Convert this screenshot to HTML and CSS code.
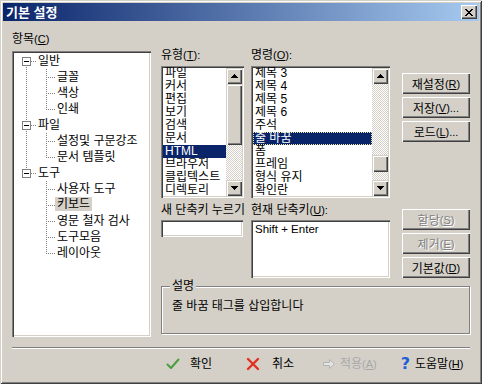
FILE: index.html
```html
<!DOCTYPE html>
<html lang="ko">
<head>
    <meta charset="UTF-8">
    <title>기본 설정</title>
    <link rel="stylesheet" href="styles.css">
</head>
<body>
<div class="window">
    <div class="titlebar">
        <span class="title">기본 설정</span>
        <span class="close">
            <svg width="8" height="7" viewBox="0 0 8 7" shape-rendering="crispEdges">
                <path d="M0 0h2v1h-2zM6 0h2v1h-2zM1 1h2v1h-2zM5 1h2v1h-2zM2 2h4v1h-4zM3 3h2v1h-2zM2 4h4v1h-4zM1 5h2v1h-2zM5 5h2v1h-2zM0 6h2v1h-2zM6 6h2v1h-2z" fill="#000"/>
            </svg>
        </span>
    </div>

    <div class="content">
        <div class="left">
            <div class="lbl">항목<span class="mn">(<u>C</u>)</span></div>
            <div class="tree sunken">
                <div class="node"><span class="ind box first"><i class="pm"></i></span><span class="txt">일반</span></div>
                <div class="node"><span class="ind vl"></span><span class="ind1"></span><span class="txt">글꼴</span></div>
                <div class="node"><span class="ind vl"></span><span class="ind1"></span><span class="txt">색상</span></div>
                <div class="node"><span class="ind vl"></span><span class="ind1 end"></span><span class="txt">인쇄</span></div>
                <div class="node"><span class="ind box"><i class="pm"></i></span><span class="txt">파일</span></div>
                <div class="node"><span class="ind vl"></span><span class="ind1"></span><span class="txt">설정및 구문강조</span></div>
                <div class="node"><span class="ind vl"></span><span class="ind1 end"></span><span class="txt">문서 템플릿</span></div>
                <div class="node"><span class="ind box last"><i class="pm"></i></span><span class="txt">도구</span></div>
                <div class="node"><span class="ind"></span><span class="ind1"></span><span class="txt">사용자 도구</span></div>
                <div class="node"><span class="ind"></span><span class="ind1"></span><span class="txt sel">키보드</span></div>
                <div class="node"><span class="ind"></span><span class="ind1"></span><span class="txt">영문 철자 검사</span></div>
                <div class="node"><span class="ind"></span><span class="ind1"></span><span class="txt">도구모음</span></div>
                <div class="node"><span class="ind"></span><span class="ind1 end"></span><span class="txt">레이아웃</span></div>
            </div>
        </div>

        <div class="right">
            <div class="row top">
                <div class="lists">
                    <div class="col type">
                        <div class="lbl">유형<span class="mn">(<u>T</u>):</span></div>
                        <div class="listbox sunken">
                            <ul class="items">
                                <li>파일</li>
                                <li>커서</li>
                                <li>편집</li>
                                <li>보기</li>
                                <li>검색</li>
                                <li>문서</li>
                                <li class="sel">HTML</li>
                                <li>브라우저</li>
                                <li>클립텍스트</li>
                                <li>디렉토리</li>
                            </ul>
                            <div class="vscroll">
                                <div class="sbtn"><svg width="7" height="4" viewBox="0 0 7 4" shape-rendering="crispEdges"><path d="M3 0h1v1h1v1h1v1h1v1h-7v-1h1v-1h1v-1h1z"/></svg></div>
                                <div class="track"><div class="thumb big"></div></div>
                                <div class="sbtn"><svg width="7" height="4" viewBox="0 0 7 4" shape-rendering="crispEdges"><path d="M0 0h7v1h-1v1h-1v1h-1v1h-1v-1h-1v-1h-1v-1h-1z"/></svg></div>
                            </div>
                        </div>
                    </div>
                    <div class="col cmd">
                        <div class="lbl">명령<span class="mn">(<u>O</u>):</span></div>
                        <div class="listbox sunken">
                            <ul class="items">
                                <li>제목 3</li>
                                <li>제목 4</li>
                                <li>제목 5</li>
                                <li>제목 6</li>
                                <li>주석</li>
                                <li class="sel focus">줄 바꿈</li>
                                <li>폼</li>
                                <li>프레임</li>
                                <li>형식 유지</li>
                                <li>확인란</li>
                            </ul>
                            <div class="vscroll">
                                <div class="sbtn"><svg width="7" height="4" viewBox="0 0 7 4" shape-rendering="crispEdges"><path d="M3 0h1v1h1v1h1v1h1v1h-7v-1h1v-1h1v-1h1z"/></svg></div>
                                <div class="track"><div class="thumb small"></div></div>
                                <div class="sbtn"><svg width="7" height="4" viewBox="0 0 7 4" shape-rendering="crispEdges"><path d="M0 0h7v1h-1v1h-1v1h-1v1h-1v-1h-1v-1h-1v-1h-1z"/></svg></div>
                            </div>
                        </div>
                    </div>
                </div>
                <div class="btns first-set">
                    <div class="btn">재설정<span class="mn">(<u>R</u>)</span></div>
                    <div class="btn">저장<span class="mn">(<u>V</u>)...</span></div>
                    <div class="btn">로드<span class="mn">(<u>L</u>)...</span></div>
                </div>
            </div>

            <div class="row mid">
                <div class="col newkey">
                    <div class="lbl">새 단축키 누르기</div>
                    <div class="field sunken"></div>
                </div>
                <div class="col curkey">
                    <div class="lbl">현재 단축키<span class="mn">(<u>U</u>):</span></div>
                    <div class="keybox sunken">Shift + Enter</div>
                </div>
                <div class="btns second-set">
                    <div class="btn off">할당<span class="mn">(<u>S</u>)</span></div>
                    <div class="btn off">제거<span class="mn">(<u>E</u>)</span></div>
                    <div class="btn">기본값<span class="mn">(<u>D</u>)</span></div>
                </div>
            </div>

            <fieldset class="desc">
                <legend>설명</legend>
                <div class="desc-text">줄 바꿈 태그를 삽입합니다</div>
            </fieldset>
        </div>
    </div>

    <div class="sep"></div>

    <div class="footer">
        <div class="fbtn ok">
            <svg class="ico" width="16" height="16" viewBox="0 0 16 16">
                <path d="M2.5 8.5 L6 12 L13.5 3.5" fill="none" stroke="#4a9e3f" stroke-width="2" stroke-linecap="round" stroke-linejoin="round"/>
            </svg>
            <span>확인</span>
        </div>
        <div class="fbtn cancel">
            <svg class="ico" width="16" height="16" viewBox="0 0 16 16">
                <path d="M3 3 L13 13 M13 3 L3 13" fill="none" stroke="#e3301f" stroke-width="2.4" stroke-linecap="round"/>
            </svg>
            <span>취소</span>
        </div>
        <div class="fbtn apply off">
            <svg class="ico" width="16" height="16" viewBox="0 0 16 16">
                <path d="M2.5 6.5 H8.5 V3.5 L13.5 8 L8.5 12.5 V9.5 H2.5 Z" fill="#e4e4e4" stroke="#b4b4b4" stroke-width="1"/>
            </svg>
            <span>적용<span class="mn">(<u>A</u>)</span></span>
        </div>
        <div class="fbtn help">
            <span class="q">?</span>
            <span>도움말<span class="mn">(<u>H</u>)</span></span>
        </div>
    </div>
</div>
</body>
</html>
```

FILE: styles.css
```css
html, body {
    margin: 0;
    padding: 0;
}
body {
    background: #d4d0c8;
    font-family: "Liberation Sans", "Noto Sans CJK KR", sans-serif;
    font-size: 12px;
    color: #000;
}
.window {
    width: 482px;
    height: 384px;
    box-sizing: border-box;
    padding: 3px;
    background: #d4d0c8;
    box-shadow: inset 1px 1px #d4d0c8, inset -1px -1px #404040,
                inset 2px 2px #fff, inset -2px -2px #808080;
}

/* title bar */
.titlebar {
    height: 18px;
    display: flex;
    align-items: center;
    justify-content: space-between;
    background: linear-gradient(to right, #0a246a, #a6caf0);
    padding-left: 3px;
}
.title {
    color: #fff;
    font-family: "Noto Sans CJK KR", sans-serif;
    font-weight: bold;
    font-size: 13px;
    line-height: 18px;
}
.close {
    width: 16px;
    height: 14px;
    margin-right: 2px;
    display: flex;
    align-items: center;
    justify-content: center;
    background: #d4d0c8;
    box-shadow: inset 1px 1px #fff, inset -1px -1px #404040, inset -2px -2px #808080;
}

/* common */
.lbl {
    line-height: 14px;
    height: 14px;
    white-space: nowrap;
}
.mn {
    font-family: "Liberation Sans", sans-serif;
    font-size: 11px;
}
.sunken {
    box-sizing: border-box;
    background: #fff;
    box-shadow: inset 1px 1px #808080, inset 2px 2px #404040,
                inset -1px -1px #fff, inset -2px -2px #d4d0c8;
}
.content {
    display: flex;
    gap: 10px;
    padding: 11px 9px 0 9px;
}

/* tree */
.left {
    width: 141px;
}
.tree {
    margin-top: 5px;
    height: 286px;
    padding: 2px;
}
.node {
    display: flex;
    height: 16px;
    line-height: 16px;
    white-space: nowrap;
}
.ind {
    width: 22px;
    flex: none;
}
.ind.vl {
    background: repeating-linear-gradient(to bottom, #808080 0 1px, transparent 1px 2px) 12px 0 / 1px 16px no-repeat;
}
.ind.box {
    background: repeating-linear-gradient(to right, #808080 0 1px, transparent 1px 2px) 17px 8px / 5px 1px no-repeat,
                repeating-linear-gradient(to bottom, #808080 0 1px, transparent 1px 2px) 12px 0 / 1px 16px no-repeat;
}
.ind.box.first {
    background: repeating-linear-gradient(to right, #808080 0 1px, transparent 1px 2px) 17px 8px / 5px 1px no-repeat,
                repeating-linear-gradient(to bottom, #808080 0 1px, transparent 1px 2px) 12px 8px / 1px 8px no-repeat;
}
.ind.box.last {
    background: repeating-linear-gradient(to right, #808080 0 1px, transparent 1px 2px) 17px 8px / 5px 1px no-repeat,
                repeating-linear-gradient(to bottom, #808080 0 1px, transparent 1px 2px) 12px 0 / 1px 8px no-repeat;
}
.pm {
    display: block;
    box-sizing: border-box;
    width: 9px;
    height: 9px;
    margin: 4px 0 0 8px;
    border: 1px solid #808080;
    background: #fff linear-gradient(#000, #000) 1px 3px / 5px 1px no-repeat;
}
.ind1 {
    width: 19px;
    flex: none;
    background: repeating-linear-gradient(to right, #808080 0 1px, transparent 1px 2px) 10px 8px / 9px 1px no-repeat,
                repeating-linear-gradient(to bottom, #808080 0 1px, transparent 1px 2px) 10px 0 / 1px 16px no-repeat;
}
.ind1.end {
    background: repeating-linear-gradient(to right, #808080 0 1px, transparent 1px 2px) 10px 8px / 9px 1px no-repeat,
                repeating-linear-gradient(to bottom, #808080 0 1px, transparent 1px 2px) 10px 0 / 1px 9px no-repeat;
}
.txt {
    padding: 0 2px;
}
.txt.sel {
    background: #d4d0c8;
    line-height: 14px;
    height: 14px;
}

/* right side */
.right {
    width: 309px;
    margin-top: 16px;
}
.row {
    display: flex;
}
.lists {
    display: flex;
    gap: 7px;
    margin-right: 12px;
}
.type { width: 83px; }
.cmd { width: 139px; }
.listbox {
    margin-top: 4px;
    height: 132px;
    padding: 2px;
    display: flex;
}
.items {
    flex: 1;
    list-style: none;
    margin: -1px 0 0;
    padding: 0;
    overflow: hidden;
}
.items li {
    height: 13px;
    line-height: 13px;
    padding-left: 2px;
    white-space: nowrap;
}
.items li.sel {
    background: #0a246a;
    color: #fff;
}
.items li.focus {
    outline: 1px dotted #f3e9a8;
    outline-offset: -1px;
}
.vscroll {
    width: 16px;
    display: flex;
    flex-direction: column;
}
.sbtn, .thumb {
    box-sizing: border-box;
    background: #d4d0c8;
    box-shadow: inset 1px 1px #d4d0c8, inset 2px 2px #fff,
                inset -1px -1px #404040, inset -2px -2px #808080;
}
.sbtn {
    height: 16px;
    display: flex;
    align-items: center;
    justify-content: center;
}
.track {
    flex: 1;
    background: repeating-conic-gradient(#fff 0 25%, #d4d0c8 0 50%) 0 0 / 2px 2px;
}
.thumb.big { height: 61px; }
.thumb.small { height: 17px; margin-top: 71px; }

.btns {
    width: 68px;
    display: flex;
    flex-direction: column;
    gap: 3px;
}
.first-set { margin-top: 25px; }
.second-set { margin-top: 6px; }
.btn {
    height: 21px;
    box-sizing: border-box;
    display: flex;
    align-items: center;
    justify-content: center;
    white-space: nowrap;
    background: #d4d0c8;
    box-shadow: inset 1px 1px #fff, inset -1px -1px #404040, inset -2px -2px #808080;
}
.btn.off {
    color: #808080;
    text-shadow: 1px 1px #fff;
}

.mid {
    margin-top: 5px;
}
.newkey {
    width: 82px;
    margin-right: 8px;
}
.curkey {
    width: 139px;
    margin-right: 12px;
}
.field {
    margin-top: 3px;
    height: 17px;
}
.keybox {
    margin-top: 3px;
    height: 58px;
    padding: 3px 4px;
    line-height: 13px;
    font-size: 11.5px;
}

.desc {
    margin: 1px 0 0;
    padding: 0 8px;
    height: 55px;
    box-sizing: border-box;
    border: 1px solid #808080;
    box-shadow: inset 1px 1px #fff, 1px 1px #fff;
}
.desc legend {
    padding: 0 2px;
    line-height: 14px;
    background: #d4d0c8;
}
.desc-text {
    margin-top: 6px;
    padding-left: 2px;
    line-height: 14px;
}

/* bottom */
.sep {
    margin: 10px 9px 0;
    border-top: 1px solid #808080;
    border-bottom: 1px solid #fff;
}
.footer {
    display: flex;
    margin-top: 4px;
    padding-left: 162px;
    height: 22px;
    line-height: 22px;
}
.fbtn {
    display: flex;
    align-items: center;
    white-space: nowrap;
}
.ico {
    flex: none;
}
.ok { width: 80px; }
.ok .ico { margin-right: 9px; }
.cancel { width: 76px; }
.cancel .ico { margin-right: 11px; }
.apply { width: 78px; }
.apply .ico { margin-right: 3px; }
.apply.off { color: #a8a8a8; }
.q {
    width: 13px;
    text-align: center;
    color: #1e5fd6;
    font-family: "DejaVu Sans", sans-serif;
    font-weight: bold;
    font-size: 16px;
    margin-right: 3px;
}
```
